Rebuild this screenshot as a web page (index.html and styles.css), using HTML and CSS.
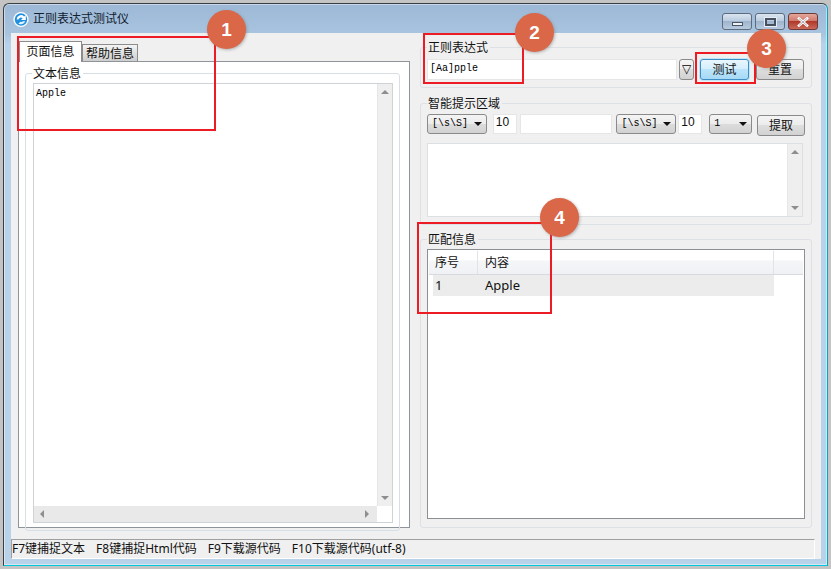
FILE: index.html
```html
<!DOCTYPE html>
<html lang="zh">
<head>
<meta charset="utf-8">
<title>正则表达式测试仪</title>
<link rel="stylesheet" href="styles.css">
</head>
<body>
<div class="window">
  <header class="titlebar">
    <svg class="app-icon" width="16" height="17" viewBox="0 0 16 17"><circle cx="8" cy="8.5" r="7.6" fill="#fff"/><circle cx="8" cy="8.5" r="6.2" fill="#1f8fe0"/><path d="M3.6 8.5a4.4 4.4 0 0 1 7.5-3.1L12.8 4v5H8l1.7-1.7A2.6 2.6 0 0 0 5.4 8.5z" fill="#fff"/><path d="M12.2 10.2a4.4 4.4 0 0 1-6.8 2.2l2-1.7a2.4 2.4 0 0 0 2.6-.5z" fill="#e3f3fc"/></svg>
    <span class="title">正则表达式测试仪</span>
    <div class="caption">
      <div class="cap cap-min"><i></i></div>
      <div class="cap cap-max"><i></i></div>
      <div class="cap cap-close"><svg width="14" height="10" viewBox="0 0 14 10"><path d="M3 1.5l8 7M11 1.5l-8 7" stroke="#fff" stroke-width="2.6" stroke-linecap="square"/><path d="M3 1.5l8 7M11 1.5l-8 7" stroke="#5b5f68" stroke-width=".5"/></svg></div>
    </div>
  </header>

  <div class="client">
    <main class="panes">
      <section class="left">
        <div class="tabs">
          <div class="tab tab-active">页面信息</div>
          <div class="tab">帮助信息</div>
        </div>
        <div class="tab-pane">
          <div class="group group-text">
            <span class="legend legend-white">文本信息</span>
            <div class="textarea textarea-main">
              <div class="textarea-row">
                <div class="text-content mono">Apple</div>
                <div class="vscroll"><i class="arr up"></i><i class="arr down"></i></div>
              </div>
              <div class="hscroll"><i class="arr left-arr"></i><i class="arr right-arr"></i></div>
            </div>
          </div>
        </div>
      </section>

      <section class="right">
        <div class="group group-regex">
          <span class="legend">正则表达式</span>
          <div class="row">
            <div class="field field-regex mono">[Aa]pple</div>
            <div class="btn btn-drop">▽</div>
            <div class="btn btn-test">测试</div>
            <div class="btn btn-reset">重置</div>
          </div>
        </div>

        <div class="group group-hint">
          <span class="legend">智能提示区域</span>
          <div class="row">
            <div class="combo combo-a mono">[\s\S]<i class="caret"></i></div>
            <div class="field field-num">10</div>
            <div class="field field-mid"></div>
            <div class="combo combo-b mono">[\s\S]<i class="caret"></i></div>
            <div class="field field-num field-num2">10</div>
            <div class="combo combo-c mono">1<i class="caret"></i></div>
            <div class="btn btn-get">提取</div>
          </div>
          <div class="textarea textarea-hint">
            <div class="text-content"></div>
            <div class="vscroll"><i class="arr up"></i><i class="arr down"></i></div>
          </div>
        </div>

        <div class="group group-match">
          <span class="legend">匹配信息</span>
          <div class="list">
            <div class="list-head">
              <div class="col col-no">序号</div>
              <div class="col col-text">内容</div>
              <div class="col col-rest"></div>
            </div>
            <div class="list-row">
              <div class="cell-no">1</div>
              <div class="cell-text">Apple</div>
            </div>
          </div>
        </div>
      </section>
    </main>

    <footer class="status">
      <span>F7键捕捉文本</span>
      <span>F8键捕捉Html代码</span>
      <span>F9下载源代码</span>
      <span>F10下载源代码(utf-8)</span>
    </footer>
  </div>
</div>

<div class="mark mark-1"></div>
<div class="mark mark-2"></div>
<div class="mark mark-3"></div>
<div class="mark mark-4"></div>
<div class="badge badge-1">1</div>
<div class="badge badge-2">2</div>
<div class="badge badge-3">3</div>
<div class="badge badge-4">4</div>
</body>
</html>
```

FILE: styles.css
```css
* { box-sizing: border-box; }
html, body { margin: 0; height: 100%; }
body {
  width: 831px;
  height: 569px;
  overflow: hidden;
  padding: 3px;
  background: #c4c4c4;
  position: relative;
  font-family: "Noto Sans", "Noto Sans CJK SC", sans-serif;
  font-size: 12px;
  color: #111;
}
.mono { font-family: "Liberation Mono", "Noto Sans CJK SC", monospace; font-size: 10px; color: #000; }

/* window frame */
.window {
  width: 825px;
  height: 563px;
  display: flex;
  flex-direction: column;
  border: 1px solid #3a3f45;
  border-bottom-color: #00c8d8;
  border-right-color: #00a8c0;
  border-radius: 6px 6px 0 0;
  background: linear-gradient(#9cb8d6 0, #a9c4df 30px, #b8d2ea 40px);
  box-shadow: inset 0 0 0 1px rgba(255,255,255,.45);
  padding: 0 6px 6px 7px;
}
.titlebar { height: 29px; flex: none; display: flex; align-items: center; padding: 1px 0 0 2px; }
.app-icon { flex: none; }
.title { margin-left: 4px; line-height: 16px; color: #10202e; }
.caption { margin-left: auto; display: flex; gap: 3px; align-self: flex-start; margin-top: 8px; margin-right: 3px; }
.cap {
  width: 30px; height: 17px;
  border: 1px solid #5e6b7c;
  border-radius: 3px;
  background: linear-gradient(#d9e4f0 0, #bccde0 45%, #9fb5cd 50%, #b7cbe0 100%);
  display: flex; align-items: center; justify-content: center;
}
.cap-min i { width: 11px; height: 4px; margin-top: 5px; background: #eef2f6; border: 1px solid #4a5462; }
.cap-max i { width: 11px; height: 8px; background: transparent; border: 2px solid #46505e; box-shadow: 0 0 0 1px #e6edf4; }
.cap-close { background: linear-gradient(#e4a79c 0, #cf7a6d 45%, #b0392b 50%, #c9695a 100%); border-color: #6b3a36; }

/* client area */
.client { flex: 1; min-height: 0; background: #f0f0f0; display: flex; flex-direction: column; }
.panes { flex: 1; min-height: 0; display: flex; gap: 10px; padding-left: 7px; padding-top: 8px; }
.left { width: 392px; flex: none; display: flex; flex-direction: column; height: 487px; }
.right { width: 392px; flex: none; padding-top: 6px; }

/* tabs */
.tabs { display: flex; height: 20px; flex: none; padding-left: 1px; align-items: flex-end; position: relative; z-index: 1; }
.tab {
  width: 56px; height: 17px;
  border: 1px solid #8c8c8c; border-bottom: 0;
  background: linear-gradient(#f4f4f4, #cdcdcd);
  text-align: center; line-height: 17px;
}
.tab-active { width: 63px; height: 21px; margin-bottom: -1px; background: #fff; line-height: 20px; }
.tab-pane { height: 467px; border: 1px solid #8f939a; background: #fff; padding: 11px 9px 0 6px; }

/* group boxes */
.group { border: 1px solid #dde1e5; border-radius: 3px; padding: 0 6px; }
.legend {
  display: block; width: max-content;
  height: 14px; line-height: 14px;
  margin: -7px 0 0 0; padding: 0 2px 0 1px;
  background: #f0f0f0;
}
.legend-white { background: #fff; }
.group-text { height: 458px; border-color: #d6dfe6; }
.group-regex { height: 41px; }
.group-hint { height: 122px; margin-top: 15px; }
.group-match { height: 289px; margin-top: 14px; }
.group-regex .row { margin-top: 4px; }
.group-hint .row { margin-top: 3px; }
.row { display: flex; align-items: flex-start; }

/* fields */
.field { height: 21px; background: #fff; border: 1px solid #e6e6e6; line-height: 18px; padding-left: 2px; }
.field-regex { width: 250px; }
.field-num { width: 24px; margin-left: 6px; height: 20px; font-family: "Liberation Sans", sans-serif; line-height: 14px; }
.field-mid { width: 93px; height: 20px; margin-left: 3px; }
.field-num2 { margin-left: 2px; }

.btn {
  height: 21px;
  border: 1px solid #8a8a8a;
  border-radius: 3px;
  background: linear-gradient(#f4f4f4 0, #ececec 48%, #dedede 50%, #d2d2d2 100%);
  text-align: center;
  line-height: 19px;
}
.btn-drop { width: 15px; margin-left: 2px; font-family: "DejaVu Sans", sans-serif; color: #000; }
.btn-test {
  width: 49px; margin-left: 6px;
  border-color: #3c8ec4;
  box-shadow: 0 0 0 1px #c0e6f8;
  background: linear-gradient(#e9f6fd 0, #d5eefc 48%, #bbe4fb 50%, #a6d9f5 100%);
}
.btn-reset { width: 48px; margin-left: 7px; }
.btn-get { width: 48px; margin-left: 5px; margin-top: 1px; }

.combo {
  height: 20px; position: relative;
  border: 1px solid #8a8a8a; border-radius: 3px;
  background: linear-gradient(#f4f4f4 0, #ececec 48%, #dcdcdc 50%, #d2d2d2 100%);
  line-height: 18px; padding-left: 4px;
}
.combo-a { width: 60px; }
.combo-b { width: 60px; margin-left: 4px; }
.combo-c { width: 43px; margin-left: 7px; }
.caret {
  position: absolute; right: 4px; top: 7px;
  border-left: 4px solid transparent; border-right: 4px solid transparent;
  border-top: 4px solid #111;
}

/* text areas */
.textarea { background: #fff; border: 1px solid #dde0e3; }
.textarea-main { height: 440px; width: 360px; margin-top: 2px; margin-left: 1px; display: flex; flex-direction: column; border-color: #cfd2d6; }
.textarea-row { flex: 1; min-height: 0; display: flex; }
.textarea-hint { height: 74px; width: 376px; margin-top: 7px; display: flex; }
.text-content { flex: 1; padding: 3px 2px 2px; line-height: 14px; }
.vscroll {
  width: 15px; flex: none;
  background: #efefef;
  border-left: 1px solid #e6e6e6;
  display: flex; flex-direction: column; justify-content: space-between; align-items: center;
  padding: 6px 0;
}
.hscroll {
  height: 16px; flex: none;
  width: 343px;
  background: #e9e9e9;
  display: flex; justify-content: space-between; align-items: center;
  padding: 0 8px 0 6px;
}
.arr { display: block; width: 0; height: 0; border: 3px solid transparent; }
.arr.up { border-top: 0; border-left-width: 4px; border-right-width: 4px; border-bottom: 4px solid #8e8e8e; }
.arr.down { border-bottom: 0; border-left-width: 4px; border-right-width: 4px; border-top: 4px solid #8e8e8e; }
.arr.left-arr { border-left: 0; border-top-width: 4px; border-bottom-width: 4px; border-right: 4px solid #8e8e8e; }
.arr.right-arr { border-right: 0; border-top-width: 4px; border-bottom-width: 4px; border-left: 4px solid #8e8e8e; }

/* match list */
.list { width: 378px; height: 270px; margin-top: 2px; background: #fff; border: 1px solid #8b8f96; padding: 1px; }
.list-head { height: 24px; display: flex; border-bottom: 1px solid #d7dbe0; background: linear-gradient(#fff 0, #fff 40%, #f4f6f8 42%, #eff1f4 100%); }
.col { line-height: 24px; border-right: 1px solid #e0e3e7; }
.col-no { width: 49px; padding-left: 6px; }
.col-text { width: 296px; padding-left: 7px; }
.col-rest { flex: 1; border-right: 0; }
.list-row { margin-left: 4px; width: 341px; height: 21px; background: #ececec; display: flex; line-height: 21px; font-size: 13px; }
.cell-no { width: 52px; padding-left: 2px; }

/* status bar */
.status {
  height: 20px; flex: none;
  width: 804px;
  border-top: 1px solid #a0a0a0;
  border-left: 1px solid #a0a0a0;
  border-right: 1px solid #fff;
  border-bottom: 1px solid #fff;
  display: flex; gap: 11px;
  line-height: 17px;
  white-space: nowrap;
}

/* annotations */
.mark { position: absolute; border: 2px solid #ed1c24; }
.mark-1 { left: 17px; top: 36px; width: 199px; height: 95px; }
.mark-2 { left: 423px; top: 33px; width: 101px; height: 51px; }
.mark-3 { left: 695px; top: 52px; width: 61px; height: 32px; }
.mark-4 { left: 417px; top: 222px; width: 135px; height: 92px; }
.badge {
  position: absolute; width: 39px; height: 39px; border-radius: 50%;
  background: #d96748;
  box-shadow: 1px 1px 3px rgba(120,120,120,.5);
  color: #fff; font-family: "Liberation Sans", sans-serif; font-weight: 700; font-size: 19px;
  text-align: center; line-height: 39px;
}
.badge-1 { left: 207px; top: 10px; }
.badge-2 { left: 515px; top: 13px; }
.badge-3 { left: 747px; top: 29px; }
.badge-4 { left: 540px; top: 198px; }
```
